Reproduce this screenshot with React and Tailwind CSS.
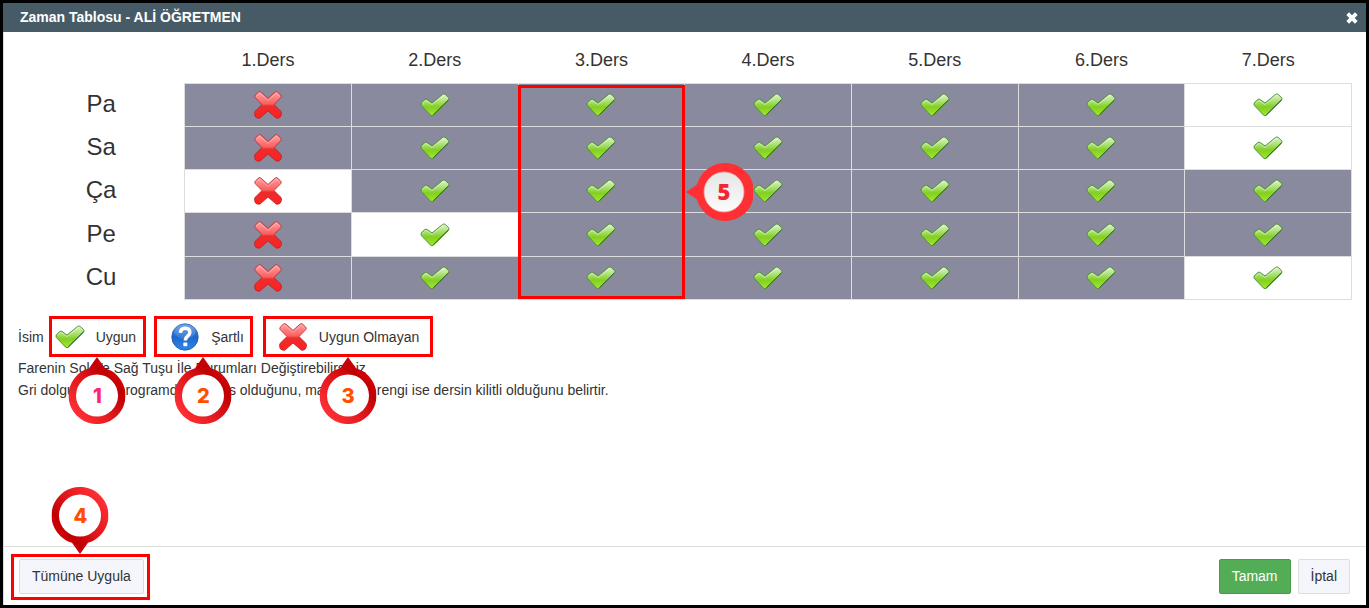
import React, { useState } from "react";

const LESSONS = [1, 2, 3, 4, 5, 6, 7];

// "free" lists the lessons that are drawn without the grey fill
const DAYS = [
  { name: "Pa", free: [7] },
  { name: "Sa", free: [7] },
  { name: "Ça", free: [1] },
  { name: "Pe", free: [2] },
  { name: "Cu", free: [7] },
];

// Gradients shared by all icons on the page
const IconDefs = () => (
  <svg className="absolute w-0 h-0" aria-hidden="true">
    <defs>
      <linearGradient id="okFill" x1="0" y1="0" x2="0" y2="1">
        <stop offset="0" stopColor="#e2f6d2" />
        <stop offset="0.45" stopColor="#9ad955" />
        <stop offset="0.6" stopColor="#84cf1f" />
        <stop offset="1" stopColor="#a0e832" />
      </linearGradient>
      <linearGradient id="noFill" x1="0" y1="0" x2="0" y2="1">
        <stop offset="0" stopColor="#ffa0a0" />
        <stop offset="0.46" stopColor="#fb6060" />
        <stop offset="0.54" stopColor="#ec2c2c" />
        <stop offset="1" stopColor="#ff2222" />
      </linearGradient>
      <linearGradient id="askFill" x1="0" y1="0" x2="0" y2="1">
        <stop offset="0" stopColor="#5f9be6" />
        <stop offset="0.5" stopColor="#1c66cc" />
        <stop offset="1" stopColor="#2f86ee" />
      </linearGradient>
      <linearGradient id="pinFill" x1="0.85" y1="0.2" x2="0.15" y2="0.9">
        <stop offset="0" stopColor="#d80408" />
        <stop offset="0.2" stopColor="#c00003" />
        <stop offset="0.5" stopColor="#dc1519" />
        <stop offset="1" stopColor="#ff3036" />
      </linearGradient>
      <linearGradient id="pinHole" x1="0" y1="0" x2="0" y2="1">
        <stop offset="0" stopColor="#e6e6e6" />
        <stop offset="1" stopColor="#fbfbfb" />
      </linearGradient>
    </defs>
  </svg>
);

const OkIcon = () => (
  <svg className="w-8 h-8 shrink-0" viewBox="0 0 32 32" aria-label="Uygun">
    <path
      d="M2.4 16.6 Q1.6 15 2.4 13.6 L6 10.4 Q7 9.8 8 10.4 L13 14 L23.6 5.4 Q25 4.4 26.2 5.4 L29.6 8.6 Q30.4 9.8 29.5 11.4 L14.4 26.2 Q13 27.4 11.6 26.2 Z"
      fill="url(#okFill)"
      stroke="#4a8a35"
      strokeWidth="0.9"
      strokeLinejoin="round"
    />
    <path d="M3.5 14.6 L7 11.5 L13 15.6 L25 6.2" fill="none" stroke="#e4f7d6" strokeWidth="0.9" opacity="0.6" />
    <path d="M29.4 10.8 L14.2 25.9" fill="none" stroke="#2f6b2a" strokeWidth="1" />
  </svg>
);

const NoIcon = () => (
  <svg className="w-8 h-8 shrink-0" viewBox="0 0 32 32" aria-label="Uygun Olmayan">
    <path
      d="M8.8 3 L16 9.4 L23.2 3 Q24.4 2.2 25.6 3.1 L28.8 6.2 Q29.7 7.4 28.8 8.6 L22 15.6 L29 22.4 Q29.7 23.6 29.4 25.2 L28.8 27.4 Q27.2 29.6 24.4 29.2 L16 22 L7.8 29.2 Q4.6 29.6 3 27.4 L2.7 25.2 Q2.3 23.6 3 22.4 L10 15.6 L3.2 8.6 Q2.3 7.4 3.2 6.2 L6.4 3.1 Q7.6 2.2 8.8 3 Z"
      fill="url(#noFill)"
      stroke="#b91f24"
      strokeWidth="0.8"
      strokeLinejoin="round"
    />
    <path d="M4.4 7.4 L7.6 4.2 L16 11.4 L24.4 4.2 L27.6 7.4" fill="none" stroke="#ffd9d9" strokeWidth="0.8" opacity="0.5" />
  </svg>
);

const AskIcon = () => (
  <svg className="w-8 h-8 shrink-0" viewBox="0 0 32 32" aria-label="Şartlı">
    <circle cx="16" cy="16" r="13.2" fill="url(#askFill)" stroke="#1a53a8" strokeWidth="0.8" />
    <ellipse cx="16" cy="10.5" rx="10.5" ry="7.5" fill="#ffffff" opacity="0.14" />
    <path
      d="M11.4 11.8 Q11.8 7.2 16.2 7.2 Q20.8 7.2 20.8 11.4 Q20.8 13.6 18.5 15.2 Q16.3 16.8 16.3 19.4"
      fill="none"
      stroke="#ffffff"
      strokeWidth="3.6"
    />
    <rect x="14.3" y="21.4" width="4" height="3.8" rx="0.6" fill="#ffffff" />
  </svg>
);

// Numbered marker whose tip points up (or down when flipped)
const Pin = ({ number, flip, color = "text-[#ff4e00]" }) => (
  <span
    className={`absolute left-1/2 -translate-x-1/2 z-10 w-[57px] h-[67px] ${flip ? "bottom-full mb-[3px]" : "top-full mt-[3px]"}`}
  >
    <svg className={flip ? "w-full h-full rotate-180" : "w-full h-full"} viewBox="0 0 57 67">
      <path d="M28.5 0 L36.5 11.2 A28.5 28.5 0 1 1 20.5 11.2 Z" fill="url(#pinFill)" />
      <circle cx="28.5" cy="38.5" r="21" fill="#ffffff" />
    </svg>
    <span
      className={`absolute inset-x-0 h-[57px] flex items-center justify-center font-['Inter'] font-extrabold text-xl ${flip ? "top-0" : "bottom-0"} ${color}`}
    >
      {number}
    </span>
  </span>
);

const SidePin = ({ number }) => (
  <span className="absolute left-full top-1/2 -translate-y-1/2 z-10 ml-1 w-[67px] h-[58px]">
    <svg className="w-full h-full" viewBox="0 0 67 58">
      <path d="M0 29 L11 21.6 A29 29 0 1 1 11 36.4 Z" fill="#ff3034" />
      <circle cx="38" cy="29" r="20" fill="url(#pinHole)" stroke="#f5a3a3" strokeWidth="0.8" />
    </svg>
    <span className="absolute inset-y-0 right-0 w-[58px] flex items-center justify-center font-['Open_Sans'] font-extrabold text-[22px] text-[#f0282f]">
      {number}
    </span>
  </span>
);

const LegendItem = ({ icon, label, number, color, className }) => (
  <div className={`relative flex items-center gap-2.5 h-[41px] border-[3px] border-[#ff0000] ${className}`}>
    {icon}
    <span>{label}</span>
    <Pin number={number} color={color} />
  </div>
);

const App = () => {
  const [open, setOpen] = useState(true);

  if (!open) return null;

  return (
    <div className="min-h-screen flex flex-col border-[3px] border-black bg-white text-[#333333] text-sm font-['Liberation_Sans',Arial,sans-serif]">
      <IconDefs />

      <header className="flex items-center justify-between h-[29px] pl-[17px] pr-2 bg-[#475b66] text-white">
        <h1 className="pb-0.5 font-bold">Zaman Tablosu - ALİ ÖĞRETMEN</h1>
        <button type="button" aria-label="Kapat" onClick={() => setOpen(false)}>
          <svg className="w-3 h-3" viewBox="0 0 12 12" fill="none" stroke="#ffffff" strokeWidth="3.8">
            <path d="M1.7 1.7 L10.3 10.3 M10.3 1.7 L1.7 10.3" />
          </svg>
        </button>
      </header>

      <main className="flex-1 border-l border-[#dddddd] px-3.5">
        <div className="relative">
          <table className="w-full h-[268px] table-fixed border-collapse text-center">
            <thead>
              <tr className="h-[51px] text-lg">
                <td></td>
                {LESSONS.map((lesson) => (
                  <th key={lesson} scope="col" className="p-0 pt-1.5 font-normal">
                    {lesson}.Ders
                  </th>
                ))}
              </tr>
            </thead>
            <tbody>
              {DAYS.map((day) => (
                <tr key={day.name} className="h-[43px]">
                  <th scope="row" className="p-0 pb-0.5 font-normal text-2xl">
                    {day.name}
                  </th>
                  {LESSONS.map((lesson) => (
                    <td
                      key={lesson}
                      className={`p-0 border border-[#dddddd] ${day.free.includes(lesson) ? "bg-white" : "bg-[#8a8a9e]"}`}
                    >
                      <div className="flex justify-center">{lesson === 1 ? <NoIcon /> : <OkIcon />}</div>
                    </td>
                  ))}
                </tr>
              ))}
            </tbody>
          </table>

          {/* Frame round the third lesson */}
          <div className="absolute left-[37.5%] w-[12.5%] top-[53px] bottom-px border-[3px] border-[#ff0000]">
            <SidePin number="5" />
          </div>
        </div>

        <div className="flex items-center mt-4">
          <span className="mr-[5px]">İsim</span>
          <LegendItem icon={<OkIcon />} label="Uygun" number="1" color="text-[#ff2277]" className="pl-0.5 pr-[7px] mr-2" />
          <LegendItem icon={<AskIcon />} label="Şartlı" number="2" className="pl-3 pr-1.5 mr-2.5" />
          <LegendItem icon={<NoIcon />} label="Uygun Olmayan" number="3" className="pl-[11px] pr-[11px]" />
        </div>
        <p className="leading-[22px]">Farenin Sol Ve Sağ Tuşu İle Durumları Değiştirebilirsiniz</p>
        <p className="leading-[22px]">
          Gri dolgu rengi, programda bir ders olduğunu, mavi dolgu rengi ise dersin kilitli olduğunu belirtir.
        </p>
      </main>

      <footer className="flex items-center justify-between h-[59px] pl-[15px] pr-4 pt-px border-l border-t border-[#dddddd]">
        <div className="relative">
          <button type="button" className="h-[35px] px-3 pb-0.5 rounded-xs border border-[#dcdde1] bg-[#f5f6fb]">
            Tümüne Uygula
          </button>
          <div className="absolute -left-2 -right-1.5 -top-[5px] -bottom-1.5 border-[3px] border-[#ff0000] pointer-events-none">
            <Pin number="4" flip />
          </div>
        </div>
        <div className="flex gap-[7px]">
          <button type="button" className="h-[35px] px-3 pb-0.5 rounded-xs border border-[#449d48] bg-[#53ad57] text-white">
            Tamam
          </button>
          <button type="button" className="h-[35px] px-3 pb-0.5 rounded-xs border border-[#dcdde1] bg-[#f5f6fb]">
            İptal
          </button>
        </div>
      </footer>
    </div>
  );
};

export default App;
